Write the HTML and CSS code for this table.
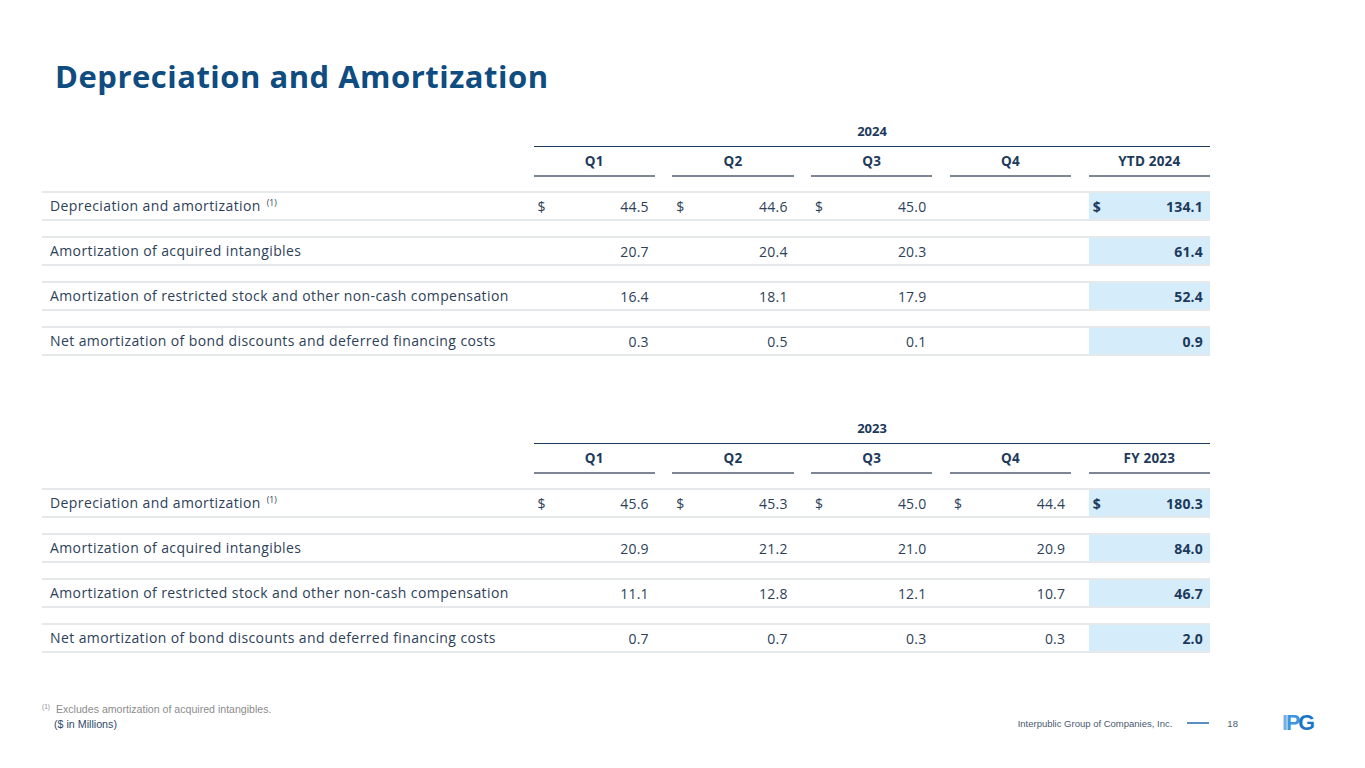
FILE: index.html
```html
<!DOCTYPE html>
<html>
<head>
<meta charset="utf-8">
<link rel="stylesheet" href="styles.css">
</head>
<body>
<div class="slide">
  <h1 class="title">Depreciation and Amortization</h1>

  <section class="block">
    <div class="year">2024</div>
    <div class="grid qhead">
      <div></div>
      <div class="q">Q1</div>
      <div class="q">Q2</div>
      <div class="q">Q3</div>
      <div class="q">Q4</div>
      <div class="q">YTD 2024</div>
    </div>
    <div class="grid row">
      <div class="label">Depreciation and amortization <sup>(1)</sup></div>
      <div class="cell"><span>$</span><span>44.5</span></div>
      <div class="cell"><span>$</span><span>44.6</span></div>
      <div class="cell"><span>$</span><span>45.0</span></div>
      <div class="cell"></div>
      <div class="cell hl"><span>$</span><span>134.1</span></div>
    </div>
    <div class="grid row">
      <div class="label">Amortization of acquired intangibles</div>
      <div class="cell"><span></span><span>20.7</span></div>
      <div class="cell"><span></span><span>20.4</span></div>
      <div class="cell"><span></span><span>20.3</span></div>
      <div class="cell"></div>
      <div class="cell hl"><span></span><span>61.4</span></div>
    </div>
    <div class="grid row">
      <div class="label">Amortization of restricted stock and other non-cash compensation</div>
      <div class="cell"><span></span><span>16.4</span></div>
      <div class="cell"><span></span><span>18.1</span></div>
      <div class="cell"><span></span><span>17.9</span></div>
      <div class="cell"></div>
      <div class="cell hl"><span></span><span>52.4</span></div>
    </div>
    <div class="grid row">
      <div class="label">Net amortization of bond discounts and deferred financing costs</div>
      <div class="cell"><span></span><span>0.3</span></div>
      <div class="cell"><span></span><span>0.5</span></div>
      <div class="cell"><span></span><span>0.1</span></div>
      <div class="cell"></div>
      <div class="cell hl"><span></span><span>0.9</span></div>
    </div>
  </section>

  <section class="block second">
    <div class="year">2023</div>
    <div class="grid qhead">
      <div></div>
      <div class="q">Q1</div>
      <div class="q">Q2</div>
      <div class="q">Q3</div>
      <div class="q">Q4</div>
      <div class="q">FY 2023</div>
    </div>
    <div class="grid row">
      <div class="label">Depreciation and amortization <sup>(1)</sup></div>
      <div class="cell"><span>$</span><span>45.6</span></div>
      <div class="cell"><span>$</span><span>45.3</span></div>
      <div class="cell"><span>$</span><span>45.0</span></div>
      <div class="cell"><span>$</span><span>44.4</span></div>
      <div class="cell hl"><span>$</span><span>180.3</span></div>
    </div>
    <div class="grid row">
      <div class="label">Amortization of acquired intangibles</div>
      <div class="cell"><span></span><span>20.9</span></div>
      <div class="cell"><span></span><span>21.2</span></div>
      <div class="cell"><span></span><span>21.0</span></div>
      <div class="cell"><span></span><span>20.9</span></div>
      <div class="cell hl"><span></span><span>84.0</span></div>
    </div>
    <div class="grid row">
      <div class="label">Amortization of restricted stock and other non-cash compensation</div>
      <div class="cell"><span></span><span>11.1</span></div>
      <div class="cell"><span></span><span>12.8</span></div>
      <div class="cell"><span></span><span>12.1</span></div>
      <div class="cell"><span></span><span>10.7</span></div>
      <div class="cell hl"><span></span><span>46.7</span></div>
    </div>
    <div class="grid row">
      <div class="label">Net amortization of bond discounts and deferred financing costs</div>
      <div class="cell"><span></span><span>0.7</span></div>
      <div class="cell"><span></span><span>0.7</span></div>
      <div class="cell"><span></span><span>0.3</span></div>
      <div class="cell"><span></span><span>0.3</span></div>
      <div class="cell hl"><span></span><span>2.0</span></div>
    </div>
  </section>

  <footer class="footer">
    <div class="notes">
      <div class="note"><sup>(1)</sup>Excludes amortization of acquired intangibles.</div>
      <div class="units">($ in Millions)</div>
    </div>
    <div class="brand">
      <span class="company">Interpublic Group of Companies, Inc.</span>
      <span class="dash"></span>
      <span class="page">18</span>
      <span class="logo"><span class="l1">I</span><span class="l2">P</span><span class="l3">G</span></span>
    </div>
  </footer>
</div>
</body>
</html>
```

FILE: styles.css
```css
* { box-sizing: border-box; }
html, body { margin: 0; padding: 0; }
body {
  width: 1365px;
  height: 768px;
  overflow: hidden;
  background: #ffffff;
  font-family: "Open Sans", "DejaVu Sans", sans-serif;
  color: #2d4159;
}
.slide {
  height: 768px;
  display: flex;
  flex-direction: column;
}
.title {
  margin: 0;
  padding: 56px 0 0 55px;
  height: 120px;
  font-size: 31px;
  line-height: 40px;
  font-weight: 700;
  color: #0f4c7f;
  letter-spacing: 0.5px;
}
.block {
  margin-left: 42px;
  width: 1168px;
}
.block.second { margin-top: 46px; }
.year {
  margin-left: 492px;
  text-align: center;
  font-size: 13px;
  font-weight: 700;
  color: #1d3a5c;
  line-height: 22px;
  padding-bottom: 4px;
  border-bottom: 1px solid #1d3a5c;
}
.grid {
  display: grid;
  grid-template-columns: 474px repeat(5, 1fr);
  column-gap: 17.5px;
}
.qhead { margin-top: 3px; margin-bottom: 14px; }
.q {
  text-align: center;
  font-size: 13.5px;
  font-weight: 700;
  color: #1d3a5c;
  line-height: 22px;
  padding-bottom: 3px;
  border-bottom: 2px solid #7c8793;
  letter-spacing: 0.2px;
}
.row {
  height: 30px;
  border-top: 2px solid #e6e9ec;
  border-bottom: 2px solid #e6e9ec;
  margin-bottom: 15px;
  align-items: stretch;
}
.label {
  padding-left: 8px;
  font-size: 14px;
  line-height: 26px;
  letter-spacing: 0.4px;
  color: #2d4159;
  white-space: nowrap;
}
.label sup {
  font-size: 8.5px;
  line-height: 0;
  vertical-align: 5px;
  margin-left: 2px;
  letter-spacing: 0;
}
.cell {
  display: flex;
  justify-content: space-between;
  align-items: center;
  padding: 0 6px 0 4px;
  font-size: 14px;
  letter-spacing: 0.2px;
  color: #2d4159;
}
.cell.hl {
  background: #d5ecfa;
  font-weight: 700;
  color: #1d3a5c;
  padding-right: 7px;
}
.footer {
  margin-top: auto;
  display: flex;
  justify-content: space-between;
  align-items: flex-end;
  padding: 0 52px 37px 42px;
  font-family: "Liberation Sans", Arial, sans-serif;
}
.note {
  font-size: 10.6px;
  color: #8c8c8c;
  line-height: 14px;
}
.note sup {
  font-size: 6.5px;
  line-height: 0;
  vertical-align: 4px;
  margin-right: 6px;
}
.units {
  padding-left: 12px;
  font-size: 10.7px;
  color: #2f4a6a;
  line-height: 14px;
  margin-top: 1px;
}
.brand {
  display: flex;
  align-items: center;
  height: 16px;
}
.company {
  font-size: 9.5px;
  color: #4a5a70;
}
.dash {
  width: 22px;
  height: 1.5px;
  background: #5b8fc0;
  margin: 0 18px 0 15px;
}
.page {
  font-size: 9.5px;
  color: #4a5a70;
  margin-right: 44px;
}
.logo {
  font-family: "Liberation Sans", Arial, sans-serif;
  font-weight: 700;
  font-size: 21.5px;
  letter-spacing: -2px;
  line-height: 16px;
}
.l1 { color: #6bb3ea; }
.l2 { color: #3d95dc; }
.l3 { color: #1b74c8; }
```
